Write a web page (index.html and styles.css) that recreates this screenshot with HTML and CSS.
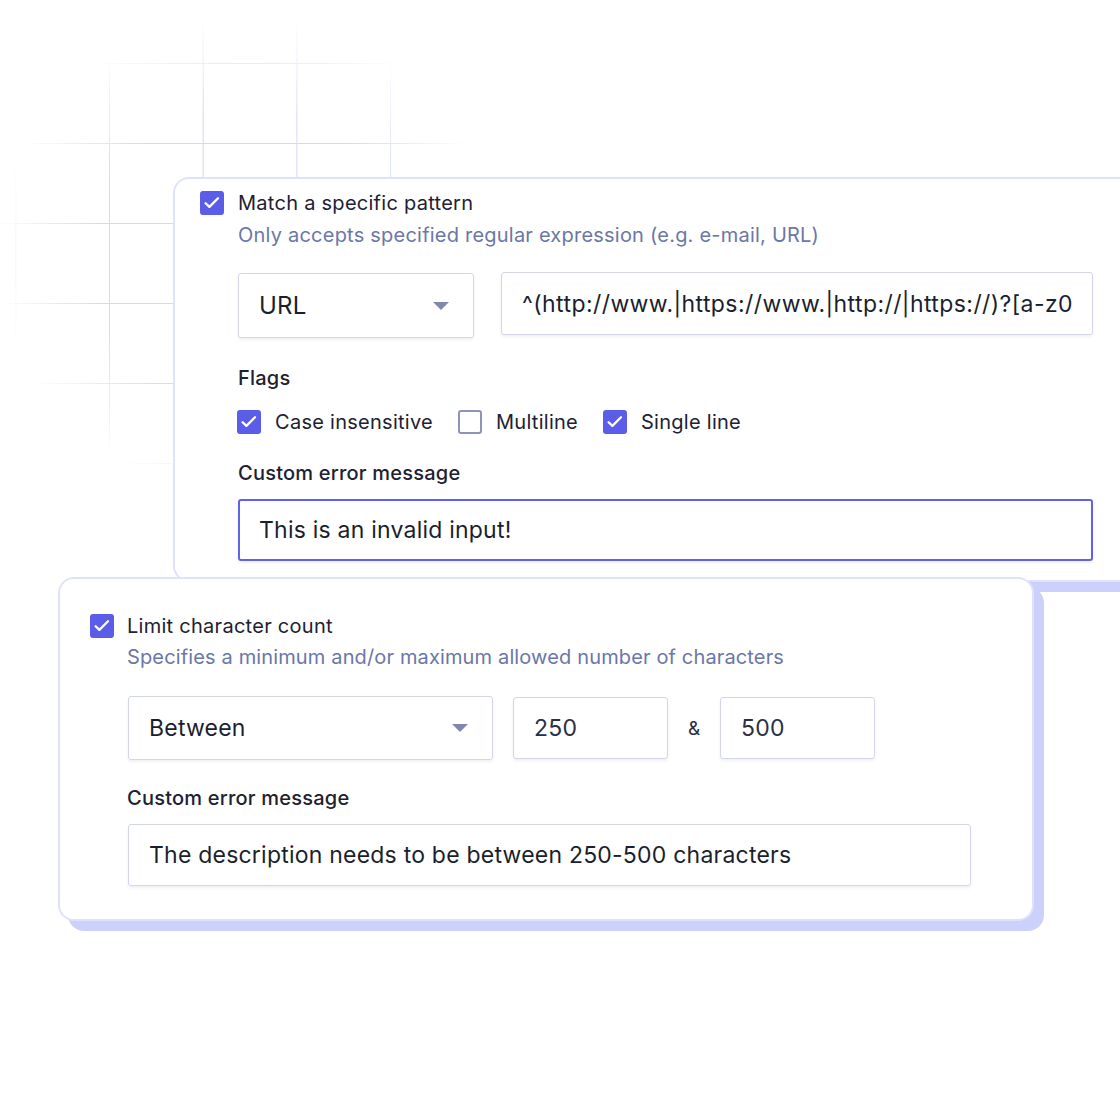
FILE: index.html
```html
<!DOCTYPE html>
<html lang="en">
<head>
    <meta charset="UTF-8">
    <title>Validation rules</title>
    <link rel="stylesheet" href="styles.css">
</head>
<body>
    <div class="lienzo">
        <!-- Cuadrícula decorativa del fondo -->
        <div class="cuadricula"></div>

        <!-- Regla: patrón -->
        <section class="tarjeta tarjeta-patron">
            <div class="cabecera">
                <span class="check activo">
                    <svg viewBox="0 0 20 20"><path d="M3.6 10.2l3.8 3.7 8.6-8.6"/></svg>
                </span>
                <span class="titulo">Match a specific pattern</span>
            </div>
            <div class="cuerpo">
                <p class="subtitulo">Only accepts specified regular expression (e.g. e-mail, URL)</p>

                <div class="fila fila-patron">
                    <div class="campo selector sel-url">
                        <span>URL</span>
                        <span class="flecha"></span>
                    </div>
                    <div class="campo campo-regex">^(http://www.|https://www.|http://|https://)?[a-z0</div>
                </div>

                <div class="etiqueta etiqueta-flags">Flags</div>
                <div class="flags">
                    <label class="flag">
                        <span class="check activo"><svg viewBox="0 0 20 20"><path d="M3.6 10.2l3.8 3.7 8.6-8.6"/></svg></span>
                        Case insensitive
                    </label>
                    <label class="flag">
                        <span class="check"></span>
                        Multiline
                    </label>
                    <label class="flag">
                        <span class="check activo"><svg viewBox="0 0 20 20"><path d="M3.6 10.2l3.8 3.7 8.6-8.6"/></svg></span>
                        Single line
                    </label>
                </div>

                <div class="etiqueta etiqueta-error">Custom error message</div>
                <div class="campo campo-error enfocado">This is an invalid input!</div>
            </div>
        </section>

        <!-- Regla: cantidad de caracteres -->
        <section class="tarjeta tarjeta-limite">
            <div class="cabecera">
                <span class="check activo">
                    <svg viewBox="0 0 20 20"><path d="M3.6 10.2l3.8 3.7 8.6-8.6"/></svg>
                </span>
                <span class="titulo">Limit character count</span>
            </div>
            <div class="cuerpo">
                <p class="subtitulo">Specifies a minimum and/or maximum allowed number of characters</p>

                <div class="fila fila-limite">
                    <div class="campo selector sel-entre">
                        <span>Between</span>
                        <span class="flecha"></span>
                    </div>
                    <div class="campo campo-numero">250</div>
                    <span class="amp">&amp;</span>
                    <div class="campo campo-numero">500</div>
                </div>

                <div class="etiqueta etiqueta-error">Custom error message</div>
                <div class="campo campo-desc">The description needs to be between 250-500 characters</div>
            </div>
        </section>
    </div>
</body>
</html>
```

FILE: styles.css
```css
/* Base */
body {
    margin: 0;
    background-color: #ffffff;
    font-family: Inter, "Noto Sans", sans-serif;
    color: #1d2132;
}
.lienzo {
    position: relative;
    width: 1120px;
    height: 1120px;
    overflow: hidden;
    padding-top: 177px;
    box-sizing: border-box;
}
.cuadricula {
    position: absolute;
    left: 0;
    top: 0;
    width: 480px;
    height: 480px;
    background-image:
        linear-gradient(to right, #d3d8fb 1px, transparent 1px),
        linear-gradient(to bottom, #d3d8fb 1px, transparent 1px);
    background-size: 93.7px 80px;
    background-position: 109px 63px;
    -webkit-mask-image: radial-gradient(ellipse 250px 240px at 245px 255px, #000 60%, transparent 100%);
    mask-image: radial-gradient(ellipse 250px 240px at 245px 255px, #000 60%, transparent 100%);
}

/* Tarjetas */
.tarjeta {
    position: relative;
    background-color: #ffffff;
    border: 2px solid #dfe2fc;
    border-radius: 16px;
    box-shadow: 10px 10px 0 #ccd1fc;
    box-sizing: border-box;
}
.tarjeta-patron {
    margin-left: 173px;
    width: 1000px;
    padding: 12px 0 19px 25px;
    border-radius: 16px 0 0 16px;
}
.tarjeta-limite {
    margin-left: 58px;
    margin-top: -5px;
    width: 976px;
    padding: 35px 0 33px 30px;
}

/* Cabecera con casilla */
.cabecera {
    display: flex;
    align-items: center;
    gap: 13px;
    height: 24px;
}
.titulo {
    font-size: 20px;
    line-height: 24px;
    letter-spacing: 0.27px;
}
.tarjeta-patron .cabecera {
    gap: 14px;
}
.check {
    width: 24px;
    height: 24px;
    box-sizing: border-box;
    border: 2px solid #8d94b6;
    border-radius: 3px;
    flex-shrink: 0;
    display: inline-flex;
}
.check.activo {
    background-color: #5b5ce8;
    border-color: #5b5ce8;
}
.check svg {
    width: 20px;
    height: 20px;
    fill: none;
    stroke: #ffffff;
    stroke-width: 2.3;
    stroke-linecap: round;
    stroke-linejoin: round;
}

.cuerpo {
    margin-left: 38px;
}
.tarjeta-limite .cuerpo {
    margin-left: 37px;
}
.subtitulo {
    margin: 8px 0 0;
    font-size: 20px;
    line-height: 24px;
    color: #6a77a7;
    letter-spacing: 0.22px;
}
.tarjeta-limite .subtitulo {
    margin-top: 7px;
    letter-spacing: 0.14px;
}

/* Campos */
.fila {
    display: flex;
    align-items: flex-start;
}
.fila-patron {
    margin-top: 25px;
    gap: 27px;
}
.fila-limite {
    margin-top: 27px;
    gap: 20px;
    align-items: center;
}
.campo {
    display: flex;
    align-items: center;
    box-sizing: border-box;
    height: 64px;
    padding: 0 20px;
    border: 1px solid #d3d6ea;
    border-radius: 3px;
    background-color: #ffffff;
    box-shadow: 0 2px 3px rgba(50, 60, 130, 0.07);
    font-size: 23px;
    letter-spacing: 0.22px;
    color: #1b1f2d;
    white-space: nowrap;
    overflow: hidden;
}
.selector {
    justify-content: space-between;
    padding-right: 24px;
}
.sel-url {
    width: 236px;
    height: 65px;
    margin-top: 1px;
    font-size: 24px;
}
.sel-entre {
    width: 365px;
    margin-left: 1px;
}
.flecha {
    width: 0;
    height: 0;
    border-left: 8px solid transparent;
    border-right: 8px solid transparent;
    border-top: 8px solid #8088ae;
}
.campo-regex {
    width: 592px;
    height: 63px;
    letter-spacing: 0.42px;
}
.campo-numero {
    width: 155px;
    height: 62px;
    color: #2a2f44;
}
.amp {
    font-size: 19px;
    color: #2a2f44;
    width: 12px;
}
.campo-error {
    width: 855px;
    height: 62px;
    margin-top: 14px;
}
.campo-desc {
    width: 843px;
    height: 62px;
    margin-top: 14px;
    margin-left: 1px;
}
.enfocado {
    border: 2px solid #6062ea;
    padding-left: 19px;
}

/* Etiquetas y flags */
.etiqueta {
    font-size: 20px;
    line-height: 24px;
    font-weight: 500;
    letter-spacing: 0.22px;
    color: #1d2132;
}
.etiqueta-flags {
    margin-top: 28px;
}
.etiqueta-error {
    margin-top: 27px;
}
.tarjeta-limite .etiqueta-error {
    margin-top: 26px;
}
.flags {
    display: flex;
    align-items: center;
    gap: 26px;
    margin-top: 20px;
}
.flag {
    display: flex;
    align-items: center;
    gap: 14px;
    font-size: 20px;
    line-height: 24px;
    letter-spacing: 0.27px;
    margin-left: -1px;
}
```
